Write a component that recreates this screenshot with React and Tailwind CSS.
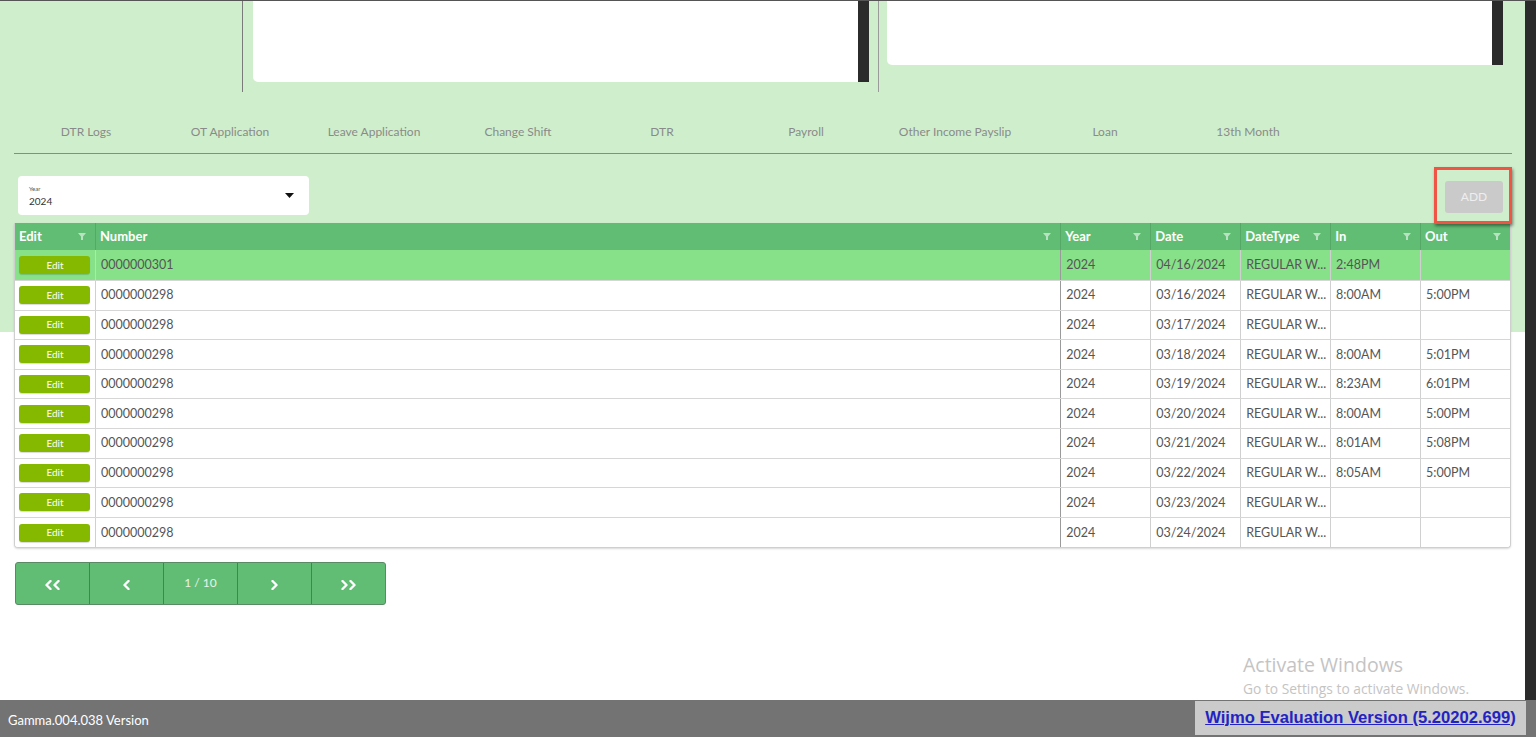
import React from "react";

const tabs = [
  ["DTR Logs", "w-[144px]"],
  ["OT Application", "w-[144px]"],
  ["Leave Application", "w-[144px]"],
  ["Change Shift", "w-[144px]"],
  ["DTR", "w-[144px]"],
  ["Payroll", "w-[144px]"],
  ["Other Income Payslip", "w-[154px]"],
  ["Loan", "w-[146px]"],
  ["13th Month", "w-[140px]"],
];

const rows = [
  ["0000000301", "2024", "04/16/2024", "REGULAR W...", "2:48PM", ""],
  ["0000000298", "2024", "03/16/2024", "REGULAR W...", "8:00AM", "5:00PM"],
  ["0000000298", "2024", "03/17/2024", "REGULAR W...", "", ""],
  ["0000000298", "2024", "03/18/2024", "REGULAR W...", "8:00AM", "5:01PM"],
  ["0000000298", "2024", "03/19/2024", "REGULAR W...", "8:23AM", "6:01PM"],
  ["0000000298", "2024", "03/20/2024", "REGULAR W...", "8:00AM", "5:00PM"],
  ["0000000298", "2024", "03/21/2024", "REGULAR W...", "8:01AM", "5:08PM"],
  ["0000000298", "2024", "03/22/2024", "REGULAR W...", "8:05AM", "5:00PM"],
  ["0000000298", "2024", "03/23/2024", "REGULAR W...", "", ""],
  ["0000000298", "2024", "03/24/2024", "REGULAR W...", "", ""],
];

const Filter = () => (
  <svg width="8" height="7" viewBox="0 0 8 7" className="shrink-0">
    <polygon points="0,0 8,0 5,3.5 5,7 3,7 3,3.5" fill="#b9e2c2" />
  </svg>
);

const HeadCell = ({ label, w, last }) => (
  <div className={`${w} h-full flex items-center justify-between pl-[4px] pr-[9px] ${last ? "" : "border-r"} border-[#55a866]`}>
    <span className="text-white font-bold text-[13px]">{label}</span>
    <Filter />
  </div>
);

const Chevron = ({ dir, double }) => {
  const one = (x) =>
    dir === "left" ? `M${x + 5} 1 L${x + 1} 5 L${x + 5} 9` : `M${x + 1} 1 L${x + 5} 5 L${x + 1} 9`;
  return (
    <svg width={double ? 16 : 7} height="10" viewBox={`0 0 ${double ? 16 : 7} 10`} fill="none" stroke="white" strokeWidth="2.4" strokeLinecap="round" strokeLinejoin="round">
      <path d={one(0.5)} />
      {double && <path d={one(8.5)} />}
    </svg>
  );
};

export default function App() {
  return (
    <div className="w-[1536px] h-[737px] flex flex-col overflow-hidden relative bg-white font-['Lato',_'Open_Sans',_sans-serif]">
      <div className="flex-1 flex border-t border-[#555]">
        {/* main */}
        <div className="w-[1525px] bg-[linear-gradient(to_bottom,#cfefcc_0px,#cfefcc_331px,#ffffff_331px)] flex flex-col">
          {/* top panels */}
          <div className="flex items-start h-[91px]">
            <div className="w-[242px]" />
            <div className="w-px h-[91px] bg-[#7a7a7a]" />
            <div className="w-[10px]" />
            <div className="w-[605px] h-[81px] bg-white rounded-bl-[5px]" />
            <div className="w-[11px] h-[81px] bg-[#2b2b2b]" />
            <div className="w-[9px]" />
            <div className="w-px h-[91px] bg-[#9a9a9a]" />
            <div className="w-[8px]" />
            <div className="w-[605px] h-[64px] bg-white rounded-bl-[5px]" />
            <div className="w-[11px] h-[64px] bg-[#2b2b2b]" />
          </div>

          {/* tabs */}
          <div className="flex pl-[14px] pt-[31px] h-[61px]">
            {tabs.map(([t, w]) => (
              <div key={t} className={`${w} text-center text-[12px] leading-[18px] text-[#8a8a8a]`}>{t}</div>
            ))}
          </div>
          <div className="ml-[14px] w-[1498px] h-px bg-[#8a8a8a]" />

          {/* year + add */}
          <div className="relative flex items-start h-[69px]">
            <div className="ml-[18px] mt-[22px] w-[291px] h-[39px] bg-white rounded-[4px] flex items-center justify-between pl-[11px] pr-[15px]">
              <div className="flex flex-col leading-none">
                <span className="text-[6px] text-[#555]">Year</span>
                <span className="text-[10px] text-[#333] mt-[4px]">2024</span>
              </div>
              <svg width="9" height="5" viewBox="0 0 9 5"><polygon points="0,0 9,0 4.5,5" fill="#111" /></svg>
            </div>
            <div className="ml-auto mr-[22px] mt-[27px] w-[58px] h-[32px] bg-[#cacaca] rounded-[3px] flex items-center justify-center text-[12px] text-[#eeeeee]">ADD</div>
            <div className="absolute left-[1434px] top-[13px] w-[78px] h-[57px] border-[3px] border-[#f05444] shadow-[1px_2px_3px_rgba(0,0,0,0.45)]" />
          </div>

          {/* grid */}
          <div className="ml-[14px] w-[1497px] border border-[#cfcfcf] border-t-0 rounded-b-[4px] shadow-[0_1px_2px_rgba(0,0,0,0.15)] bg-white overflow-hidden">
            <div className="flex h-[27px] bg-[#62bd74]">
              <HeadCell label="Edit" w="w-[81px]" />
              <HeadCell label="Number" w="w-[966px]" />
              <HeadCell label="Year" w="w-[90px]" />
              <HeadCell label="Date" w="w-[90px]" />
              <HeadCell label="DateType" w="w-[90px]" />
              <HeadCell label="In" w="w-[90px]" />
              <HeadCell label="Out" w="w-[89px]" last />
            </div>
            {rows.map((r, i) => (
              <div key={i} className={`flex ${i === 0 ? "h-[31px] bg-[#86e189]" : "h-[29.6px] bg-white"} ${i === rows.length - 1 ? "" : "border-b border-[#d6d6d6]"} text-[12.5px] text-[#555]`}>
                <div className="w-[81px] flex items-center justify-center border-r border-[#d0d0d0]">
                  <div className="w-[71px] h-[18px] rounded-[3px] bg-[#84b900] shadow-[0_1px_1px_rgba(0,0,0,0.15)] flex items-center justify-center text-white text-[10px]">Edit</div>
                </div>
                <div className="w-[966px] flex items-center pl-[5px] pt-px border-r border-[#9a9a9a]">{r[0]}</div>
                <div className="w-[90px] flex items-center pl-[5px] pt-px border-r border-[#d0d0d0]">{r[1]}</div>
                <div className="w-[90px] flex items-center pl-[5px] pt-px border-r border-[#d0d0d0]">{r[2]}</div>
                <div className="w-[90px] flex items-center pl-[5px] pt-px border-r border-[#d0d0d0] whitespace-nowrap overflow-hidden">{r[3]}</div>
                <div className="w-[90px] flex items-center pl-[5px] pt-px border-r border-[#d0d0d0]">{r[4]}</div>
                <div className="w-[89px] flex items-center pl-[5px] pt-px">{r[5]}</div>
              </div>
            ))}
          </div>

          {/* pagination */}
          <div className="ml-[15px] mt-[14px] w-[371px] h-[43px] flex rounded-[3px] border border-[#5a8a63] overflow-hidden bg-[#62bd74]">
            <div className="flex-1 flex items-center justify-center border-r border-[#4f7d58] pt-[2px]"><Chevron dir="left" double /></div>
            <div className="flex-1 flex items-center justify-center border-r border-[#4f7d58] pt-[2px]"><Chevron dir="left" /></div>
            <div className="flex-1 flex items-center justify-center border-r border-[#4f7d58] pb-[2px] text-[12px] text-[#e6f4ea]">1 / 10</div>
            <div className="flex-1 flex items-center justify-center border-r border-[#4f7d58] pt-[2px]"><Chevron dir="right" /></div>
            <div className="flex-1 flex items-center justify-center pt-[2px]"><Chevron dir="right" double /></div>
          </div>
        </div>
        {/* browser scrollbar */}
        <div className="w-[11px] bg-[#2b2b2b]" />
      </div>

      {/* footer */}
      <div className="h-[37px] bg-[#737373] flex items-center pl-[8px] pt-[4px] text-[13px] text-white">Gamma.004.038 Version</div>

      {/* windows watermark */}
      <div className="absolute left-[1243px] top-[655px] flex flex-col text-[#c4c4c4] font-['Open_Sans',_sans-serif] leading-none">
        <span className="text-[19.5px]">Activate Windows</span>
        <span className="text-[13.8px] mt-[7px]">Go to Settings to activate Windows.</span>
      </div>

      {/* wijmo */}
      <div className="absolute left-[1195px] top-[701px] w-[331px] h-[34px] bg-[#cbcbcb] flex items-center justify-center">
        <span className="font-['Liberation_Sans',_Arial,_sans-serif] font-bold text-[16.6px] text-[#2323c4] underline whitespace-nowrap">Wijmo Evaluation Version (5.20202.699)</span>
      </div>
    </div>
  );
}
